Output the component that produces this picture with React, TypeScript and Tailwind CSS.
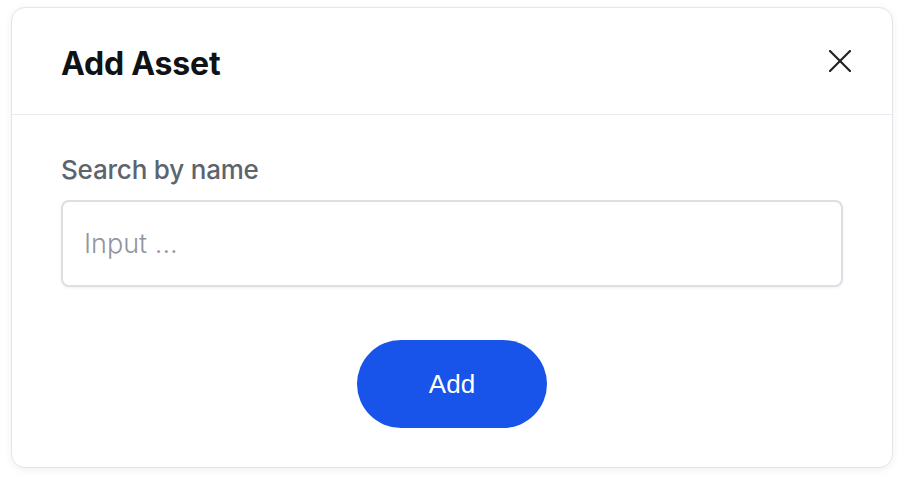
export default function App() {
  return (
    <div className="min-h-[484px] w-[904px] bg-white px-[11px] pt-[7px] [font-family:Inter,'Noto_Sans',sans-serif]">
      <div className="flex h-[461px] w-[882px] flex-col rounded-[14px] border border-[#e3e5e8] bg-white shadow-[0_2px_8px_rgba(0,0,0,0.06)]">
        <div className="flex h-[107px] shrink-0 items-center justify-between border-b border-[#e6e9ee] pl-[49px] pr-[40px]">
          <h2 className="pt-[6px] text-[32px] font-bold tracking-[-0.2px] text-[#111214]">Add Asset</h2>
          <button className="flex h-[24px] w-[24px] items-center justify-center text-[#1f2023]">
            <svg width="22" height="22" viewBox="0 0 22 22" fill="none" stroke="currentColor" strokeWidth="2.2" strokeLinecap="round">
              <path d="M1 1 L21 21" />
              <path d="M21 1 L1 21" />
            </svg>
          </button>
        </div>
        <div className="flex flex-col px-[49px] pt-[37px]">
          <label className="text-[26px] font-medium leading-[36px] tracking-[-0.2px] text-[#5d646d]">Search by name</label>
          <input
            placeholder="Input ..."
            className="mt-[12px] h-[87px] w-full rounded-[8px] border-2 border-[#dcdfe4] bg-white px-[21px] text-[27px] font-light text-[#222] shadow-[0_1px_3px_rgba(0,0,0,0.06)] outline-none placeholder:text-[#8f969f]"
          />
          <div className="mt-[53px] flex justify-center">
            <button className="h-[88px] w-[190px] rounded-full bg-[#1853ea] text-[26px] text-white [font-family:'Liberation_Sans',Arial,sans-serif]">
              Add
            </button>
          </div>
        </div>
      </div>
    </div>
  );
}
